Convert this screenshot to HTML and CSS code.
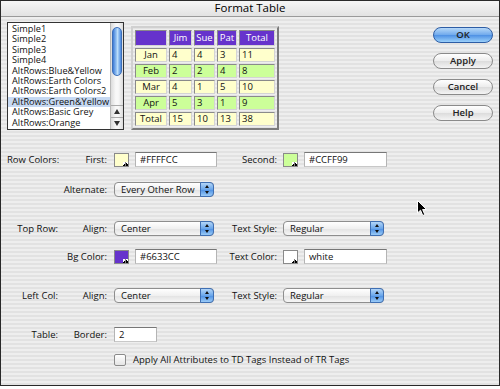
FILE: index.html
```html
<!DOCTYPE html>
<html lang="en">
<head>
    <meta charset="UTF-8">
    <title>Format Table</title>
    <link rel="stylesheet" href="styles.css">
</head>
<body>
    <div class="window">
        <div class="titlebar">Format Table</div>
        <div class="content">
            <div class="top">
                <div class="listbox">
                    <ul class="items">
                        <li>Simple1</li>
                        <li>Simple2</li>
                        <li>Simple3</li>
                        <li>Simple4</li>
                        <li>AltRows:Blue&amp;Yellow</li>
                        <li>AltRows:Earth Colors</li>
                        <li>AltRows:Earth Colors2</li>
                        <li class="selected">AltRows:Green&amp;Yellow</li>
                        <li>AltRows:Basic Grey</li>
                        <li>AltRows:Orange</li>
                        <li>AltRows:Purple</li>
                    </ul>
                    <div class="scrollbar">
                        <div class="thumb"></div>
                        <div class="arrows">
                            <div class="arrow up"></div>
                            <div class="arrow down"></div>
                        </div>
                    </div>
                </div>

                <table class="preview">
                    <tr class="head"><td></td><td>Jim</td><td>Sue</td><td>Pat</td><td>Total</td></tr>
                    <tr class="odd"><td>Jan</td><td>4</td><td>4</td><td>3</td><td>11</td></tr>
                    <tr class="even"><td>Feb</td><td>2</td><td>2</td><td>4</td><td>8</td></tr>
                    <tr class="odd"><td>Mar</td><td>4</td><td>1</td><td>5</td><td>10</td></tr>
                    <tr class="even"><td>Apr</td><td>5</td><td>3</td><td>1</td><td>9</td></tr>
                    <tr class="odd"><td>Total</td><td>15</td><td>10</td><td>13</td><td>38</td></tr>
                </table>

                <div class="buttons">
                    <button class="btn default">OK</button>
                    <button class="btn">Apply</button>
                    <button class="btn">Cancel</button>
                    <button class="btn">Help</button>
                </div>
            </div>

            <div class="form">
                <div class="row first-row">
                    <span class="label">Row Colors:</span>
                    <span class="label sub">First:</span>
                    <span class="field"><span class="swatch" style="background-color: #FFFFCC;"></span><span class="text-input">#FFFFCC</span></span>
                    <span class="label sub2">Second:</span>
                    <span class="field"><span class="swatch" style="background-color: #CCFF99;"></span><span class="text-input">#CCFF99</span></span>
                </div>
                <div class="row gap-sm">
                    <span class="label"></span>
                    <span class="label sub">Alternate:</span>
                    <span class="field"><span class="popup">Every Other Row<span class="popup-arrows"></span></span></span>
                </div>
                <div class="row gap-lg">
                    <span class="label">Top Row:</span>
                    <span class="label sub">Align:</span>
                    <span class="field"><span class="popup">Center<span class="popup-arrows"></span></span></span>
                    <span class="label sub2">Text Style:</span>
                    <span class="field"><span class="popup wide">Regular<span class="popup-arrows"></span></span></span>
                </div>
                <div class="row gap-xs">
                    <span class="label"></span>
                    <span class="label sub">Bg Color:</span>
                    <span class="field"><span class="swatch" style="background-color: #6633CC;"></span><span class="text-input">#6633CC</span></span>
                    <span class="label sub2">Text Color:</span>
                    <span class="field"><span class="swatch" style="background-color: #FFFFFF;"></span><span class="text-input">white</span></span>
                </div>
                <div class="row gap-lg">
                    <span class="label">Left Col:</span>
                    <span class="label sub">Align:</span>
                    <span class="field"><span class="popup">Center<span class="popup-arrows"></span></span></span>
                    <span class="label sub2">Text Style:</span>
                    <span class="field"><span class="popup wide">Regular<span class="popup-arrows"></span></span></span>
                </div>
                <div class="row gap-lg">
                    <span class="label">Table:</span>
                    <span class="label sub">Border:</span>
                    <span class="field"><span class="text-input short">2</span></span>
                </div>
                <div class="row gap-tiny">
                    <span class="label"></span>
                    <span class="label sub"></span>
                    <span class="check-field"><span class="checkbox"></span>Apply All Attributes to TD Tags Instead of TR Tags</span>
                </div>
            </div>
        </div>

        <svg class="cursor" width="11" height="17" viewBox="0 0 11 17">
            <path d="M0.5 0.5 L0.5 13 L3.5 10.2 L5.8 15.5 L7.8 14.6 L5.6 9.5 L9.6 9.5 Z" fill="#000" stroke="#fff" stroke-width="1"/>
        </svg>
    </div>
</body>
</html>
```

FILE: styles.css
```css
body {
    margin: 0;
    padding: 0;
    background-color: #ffffff;
    font-family: "Open Sans", "DejaVu Sans", sans-serif;
    font-size: 9.5px;
    color: #111;
}

.window {
    position: relative;
    width: 498px;
    height: 384px;
    border: 1px solid #2a2a2a;
    background: repeating-linear-gradient(to bottom, #eeeeee 0px, #eeeeee 2px, #e2e2e2 2px, #e2e2e2 4px);
    overflow: hidden;
}

.titlebar {
    height: 15px;
    line-height: 14px;
    text-align: center;
    font-size: 11.5px;
    color: #000;
    background: linear-gradient(to bottom, #f6f6f6, #e2e2e2);
    border-bottom: 1px solid #9a9a9a;
}

.content {
    padding: 5px 6px 0 6px;
}

.top {
    display: flex;
    align-items: flex-start;
}

/* style list */
.listbox {
    display: flex;
    width: 115px;
    height: 106px;
    border: 1px solid #333;
    background-color: white;
    overflow: hidden;
}

.items {
    list-style: none;
    margin: 0;
    padding: 1px 0 0 0;
    flex: 1;
    overflow: hidden;
    font-size: 9.2px;
}

.items li {
    height: 10.4px;
    line-height: 10.4px;
    padding-left: 4px;
    white-space: nowrap;
}

.items li.selected {
    background-color: #c6d9f3;
}

.scrollbar {
    position: relative;
    width: 12px;
    border-left: 1px solid #b8b8b8;
    background: linear-gradient(to right, #dcdcdc, #f8f8f8 40%, #f8f8f8 60%, #dcdcdc);
    display: flex;
    flex-direction: column;
    justify-content: space-between;
}

.thumb {
    margin: 4px 1px 0 1px;
    height: 47px;
    border-radius: 5px;
    border: 1px solid #3d6fb8;
    background: linear-gradient(to right, #3d7ad6, #9cc8f5 45%, #bfe0fb 55%, #4a88de);
}

.arrows {
    border-top: 1px solid #aaa;
}

.arrow {
    height: 11px;
    display: flex;
    align-items: center;
    justify-content: center;
}

.arrow.up {
    border-bottom: 1px solid #aaa;
}

.arrow.up::before {
    content: "";
    border-left: 3px solid transparent;
    border-right: 3px solid transparent;
    border-bottom: 5px solid #333;
}

.arrow.down::before {
    content: "";
    border-left: 3px solid transparent;
    border-right: 3px solid transparent;
    border-top: 5px solid #333;
}

/* preview table */
.preview {
    margin: 4px 0 0 7px;
    border-collapse: separate;
    border-spacing: 2px;
    border: 2px solid;
    border-color: #d0d0d0 #7c7c7c #7c7c7c #d0d0d0;
    font-size: 9.5px;
}

.preview td {
    padding: 0 0 0 2px;
    height: 12px;
    line-height: 12px;
    border: 1px solid;
    border-color: #8a8a8a #d4d4d4 #d4d4d4 #8a8a8a;
    text-align: left;
}

.preview td:nth-child(1) { width: 28px; text-align: center; padding: 0 1px; }
.preview td:nth-child(2) { width: 19px; }
.preview td:nth-child(3) { width: 17px; }
.preview td:nth-child(4) { width: 16px; }
.preview td:nth-child(5) { width: 32px; }

.preview tr.head td {
    height: 14px;
    line-height: 14px;
    background-color: #6633CC;
    color: white;
    text-align: center;
    padding: 0;
}

.preview tr.odd td {
    background-color: #FFFFCC;
}

.preview tr.even td {
    background-color: #CCFF99;
}

/* buttons */
.buttons {
    margin: 5px 0 0 auto;
    display: flex;
    flex-direction: column;
    gap: 10px;
}

.btn {
    width: 60px;
    height: 16px;
    padding: 0;
    border-radius: 8px;
    border: 1px solid #8a8a8a;
    background: linear-gradient(to bottom, #ffffff, #ececec 50%, #dcdcdc 51%, #f4f4f4);
    font-family: "Open Sans", "DejaVu Sans", sans-serif;
    font-size: 9.5px;
    font-weight: 600;
    color: #222;
    line-height: 14px;
}

.btn.default {
    border-color: #2d5da5;
    background: linear-gradient(to bottom, #b6d8f8, #6fa9ec 50%, #4d90e4 51%, #9bd0fa);
}

/* form */
.form {
    margin-top: 21px;
}

.row {
    display: grid;
    grid-template-columns: 51px 56px 103px 66px 104px;
    height: 17px;
    align-items: center;
}

.gap-tiny { margin-top: 8px; }
.gap-xs { margin-top: 11px; }
.gap-sm { margin-top: 13px; }
.gap-lg { margin-top: 22px; }

.label {
    text-align: right;
    white-space: nowrap;
}

.label.sub {
    padding-right: 7px;
}

.label.sub2 {
    padding-right: 6px;
}

.field {
    display: flex;
    align-items: center;
    gap: 6px;
}

.swatch {
    position: relative;
    width: 13px;
    height: 12px;
    border: 1px solid #8a8a8a;
    flex: none;
}

.swatch::after {
    content: "";
    position: absolute;
    right: 0;
    bottom: 0;
    width: 5px;
    height: 4px;
    background:
        linear-gradient(to bottom right, transparent 50%, #000 50%) left / 50% 100% no-repeat,
        linear-gradient(to bottom left, transparent 50%, #000 50%) right / 50% 100% no-repeat,
        #fff;
}

.text-input {
    width: 77px;
    height: 13px;
    line-height: 13px;
    padding-left: 4px;
    background-color: white;
    border: 1px solid;
    border-color: #777 #b4b4b4 #c8c8c8 #b4b4b4;
}

.text-input.short {
    width: 37px;
}

.popup {
    position: relative;
    width: 92px;
    height: 13px;
    line-height: 13px;
    padding-left: 6px;
    border: 1px solid #8e8e8e;
    border-radius: 4px;
    background: linear-gradient(to bottom, #ffffff, #f0f0f0 50%, #e2e2e2 51%, #f6f6f6);
    white-space: nowrap;
}

.popup.wide {
    width: 93px;
}

.popup-arrows {
    position: absolute;
    top: -1px;
    right: -1px;
    width: 14px;
    height: 15px;
    border-radius: 0 4px 4px 0;
    border: 1px solid #3f6fb3;
    box-sizing: border-box;
    background: linear-gradient(to bottom, #b4d6f8, #6aa6ea 50%, #4b8ee3 51%, #9acbf7);
}

.popup-arrows::before,
.popup-arrows::after {
    content: "";
    position: absolute;
    left: 4px;
    border-left: 2.5px solid transparent;
    border-right: 2.5px solid transparent;
}

.popup-arrows::before {
    top: 2px;
    border-bottom: 3px solid #111;
}

.popup-arrows::after {
    bottom: 2px;
    border-top: 3px solid #111;
}

.check-field {
    grid-column: 3 / 6;
    display: flex;
    align-items: center;
    gap: 7px;
    white-space: nowrap;
}

.checkbox {
    width: 10px;
    height: 10px;
    border: 1px solid #8a8a8a;
    border-radius: 2px;
    background: linear-gradient(to bottom, #ffffff, #e4e4e4);
}

.cursor {
    position: absolute;
    left: 416px;
    top: 199px;
}
```
